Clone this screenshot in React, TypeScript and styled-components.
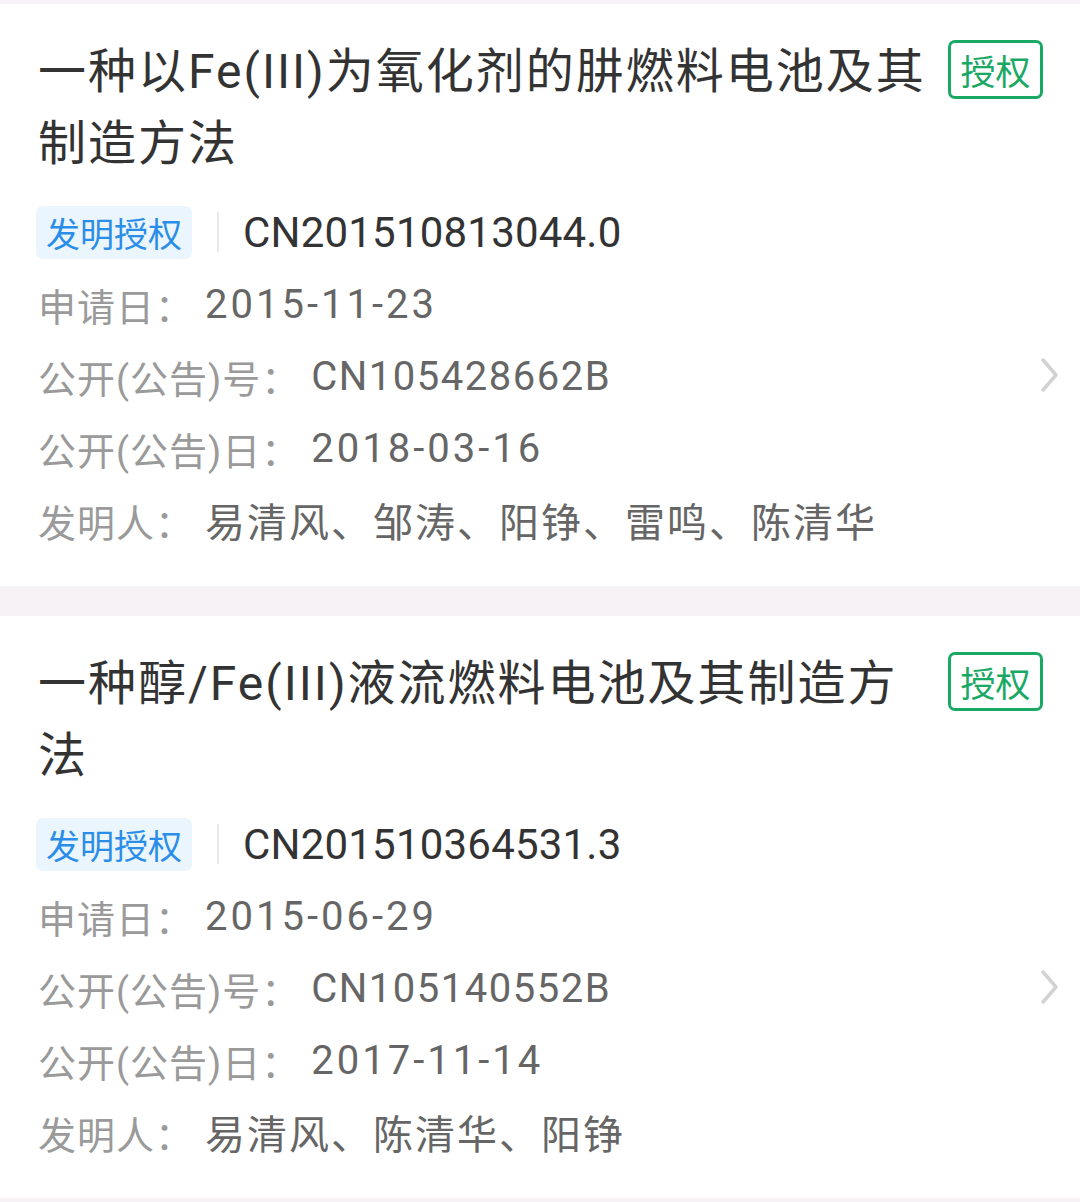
import React from 'react';
import styled, { createGlobalStyle } from 'styled-components';

const GlobalStyle = createGlobalStyle`
  html, body {
    margin: 0;
    padding: 0;
    background: #f6f2f5;
  }
  body {
    font-family: Roboto, "Noto Sans CJK SC", sans-serif;
    -webkit-font-smoothing: antialiased;
  }
`;

const List = styled.div`
  display: flex;
  flex-direction: column;
  gap: 30px;
  padding: 4px 0;
`;

const Card = styled.div`
  background: #fff;
  padding: 32px 20px 30px 38px;
`;

const Header = styled.div`
  display: flex;
  align-items: flex-start;
  gap: 14px;
  padding-right: 17px;
  margin-bottom: 16px;
`;

const Title = styled.div`
  flex: 1;
  font-size: 48px;
  line-height: 72px;
  letter-spacing: 2px;
  color: #333;
  white-space: pre-line;
`;

const Status = styled.div`
  flex: none;
  margin-top: 4px;
  width: 95px;
  height: 59px;
  box-sizing: border-box;
  border: 3px solid #1aa865;
  border-radius: 7px;
  color: #1aa865;
  font-size: 35px;
  display: flex;
  align-items: center;
  justify-content: center;
`;

const Body = styled.div`
  display: flex;
  align-items: center;
`;

const Fields = styled.div`
  flex: 1;
  display: flex;
  flex-direction: column;
`;

const Row = styled.div`
  height: 72px;
  display: flex;
  align-items: center;
`;

const Tag = styled.span`
  margin-left: -2px;
  height: 53px;
  padding: 0 10px;
  border-radius: 7px;
  background: #ebf5fe;
  color: #2a8ee8;
  font-size: 34px;
  display: flex;
  align-items: center;
`;

const Divider = styled.span`
  width: 2px;
  height: 40px;
  margin: 0 24px 0 25px;
  background: #e8e8e8;
`;

const Number = styled.span`
  font-size: 42px;
  color: #333;
  letter-spacing: 0.2px;
`;

const Label = styled.span`
  font-size: 38px;
  color: #9a9a9a;
  letter-spacing: 1px;
  margin-right: 11px;
`;

const Value = styled.span<{ $tracking: number }>`
  font-size: 40px;
  color: #666;
  letter-spacing: ${(p) => p.$tracking}px;
`;

const Chevron = styled.svg`
  flex: none;
  width: 22px;
  height: 40px;
`;

type Patent = {
  title: string;
  kind: string;
  appNo: string;
  appDate: string;
  pubNo: string;
  pubDate: string;
  inventors: string;
};

const patents: Patent[] = [
  {
    title: '一种以Fe(III)为氧化剂的肼燃料电池及其\n制造方法',
    kind: '发明授权',
    appNo: 'CN201510813044.0',
    appDate: '2015-11-23',
    pubNo: 'CN105428662B',
    pubDate: '2018-03-16',
    inventors: '易清风、邹涛、阳铮、雷鸣、陈清华',
  },
  {
    title: '一种醇/Fe(III)液流燃料电池及其制造方\n法',
    kind: '发明授权',
    appNo: 'CN201510364531.3',
    appDate: '2015-06-29',
    pubNo: 'CN105140552B',
    pubDate: '2017-11-14',
    inventors: '易清风、陈清华、阳铮',
  },
];

const PatentCard = ({ p }: { p: Patent }) => (
  <Card>
    <Header>
      <Title>{p.title}</Title>
      <Status>授权</Status>
    </Header>
    <Body>
      <Fields>
        <Row>
          <Tag>{p.kind}</Tag>
          <Divider />
          <Number>{p.appNo}</Number>
        </Row>
        <Row>
          <Label>申请日：</Label>
          <Value $tracking={3}>{p.appDate}</Value>
        </Row>
        <Row>
          <Label>公开(公告)号：</Label>
          <Value $tracking={1.5}>{p.pubNo}</Value>
        </Row>
        <Row>
          <Label>公开(公告)日：</Label>
          <Value $tracking={3}>{p.pubDate}</Value>
        </Row>
        <Row>
          <Label>发明人：</Label>
          <Value $tracking={2}>{p.inventors}</Value>
        </Row>
      </Fields>
      <Chevron viewBox="0 0 22 40">
        <path d="M5 4 L18 19 L5 34" fill="none" stroke="#d2d2d2" strokeWidth="3.5" strokeLinecap="round" strokeLinejoin="round" />
      </Chevron>
    </Body>
  </Card>
);

export default function App() {
  return (
    <>
      <GlobalStyle />
      <List>
        {patents.map((p) => (
          <PatentCard key={p.appNo} p={p} />
        ))}
      </List>
    </>
  );
}
